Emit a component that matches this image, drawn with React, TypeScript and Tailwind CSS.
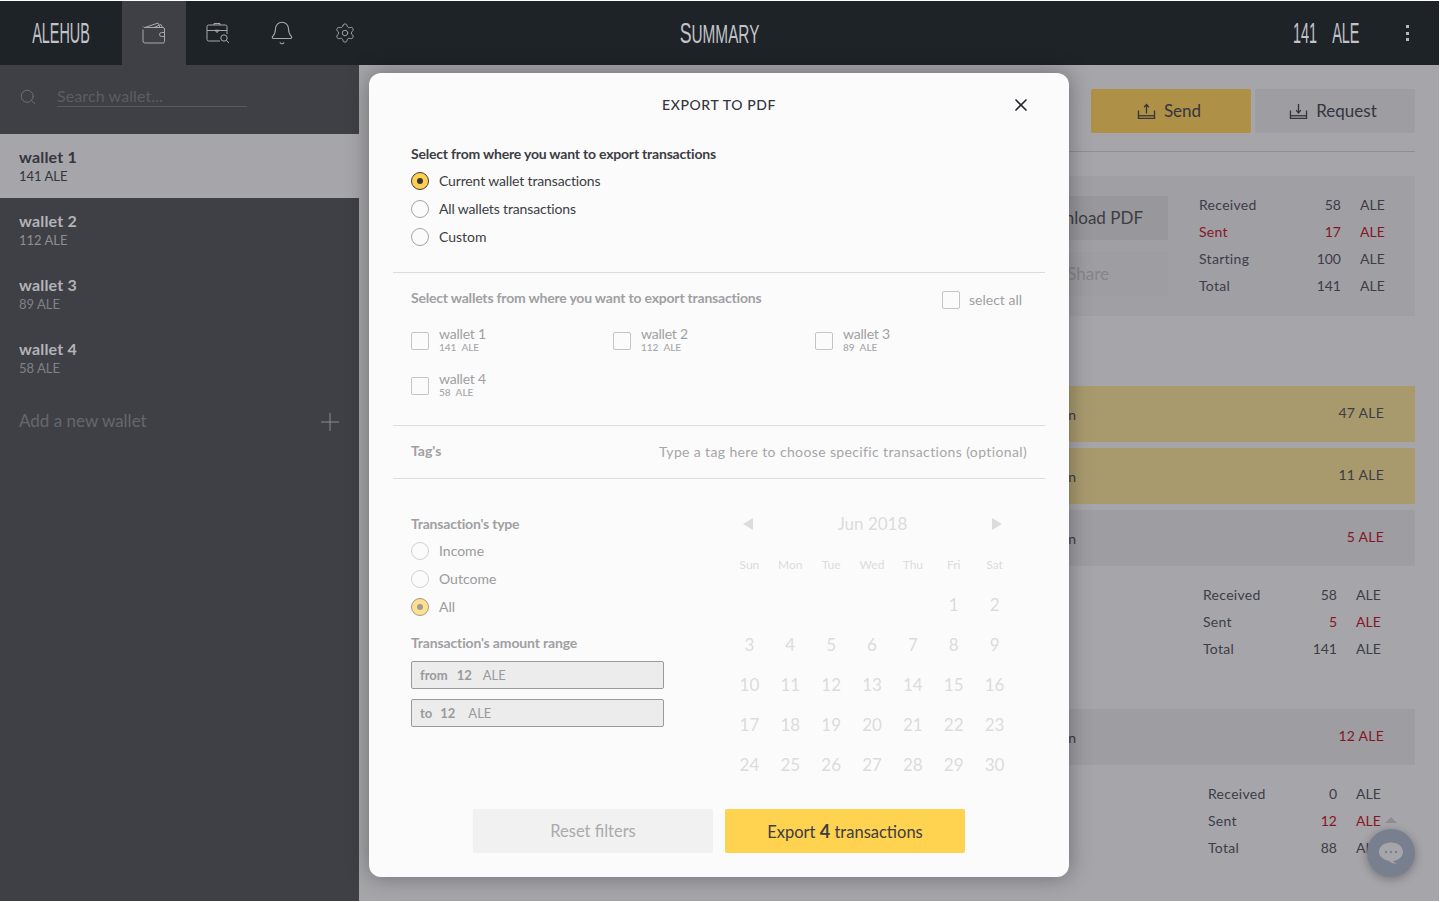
import React from "react";
import { Bell, Settings, Search, X } from "lucide-react";

const WalletIcon = () => (
  <svg width="24" height="22" viewBox="0 0 24 22" fill="none" stroke="#a8a8ac" strokeWidth="1" className="block">
    <path d="M1 7.500V19a2 2 0 0 0 2 2h18a1.500 1.500 0 0 0 1.500-1.500V7a1.500 1.500 0 0 0-1.500-1.500H3A2 2 0 0 1 1 4.500" />
    <path d="M3 5.500 16 1l2 4.500M12 5.500 19 2.500l1.500 3" />
    <path d="M22.500 10.500h-3a1.500 1.500 0 0 0 0 4h3" />
  </svg>
);

const CaseSearchIcon = () => (
  <svg width="24" height="22" viewBox="0 0 24 22" fill="none" stroke="#a8a8ac" strokeWidth="1" className="block">
    <path d="M14 19H2.500A1.500 1.500 0 0 1 1 17.500v-13A1.500 1.500 0 0 1 2.500 3h17A1.500 1.500 0 0 1 21 4.500V12" />
    <path d="M1 8.500h20M8 3V1.500h6V3" />
    <path d="M10 7.500v2.500h2V7.500" />
    <circle cx="18" cy="16" r="3.200" />
    <path d="m20.300 18.300 2.700 2.700" />
  </svg>
);

const TrayIcon = ({ up, color }: { up?: boolean; color: string }) => (
  <svg width="19" height="17" viewBox="0 0 20 18" fill="none" stroke={color} strokeWidth="1.400" className="block">
    <path d="M1.500 8v8.300h17V8" />
    <path d="M1.500 13.500h17" />
    {up ? <path d="M10 11V2M7.500 4.500 10 1.500l2.500 3" /> : <path d="M10 1v9M7.500 7.500 10 10.500l2.500-3" />}
  </svg>
);

const Radio = ({ label, on, dim, tight }: { label: string; on?: boolean; dim?: boolean; tight?: boolean }) => (
  <div className="flex h-7 items-center gap-[10px]">
    <div
      className={
        on
          ? dim
            ? "flex size-[18px] items-center justify-center rounded-full border border-[#9c9c9c] bg-[#ffdf8b]"
            : "flex size-[18px] items-center justify-center rounded-full border border-[#3c3d45] bg-[#ffcf4d]"
          : dim
            ? "size-[18px] rounded-full border border-[#d2d2d2] bg-[#fbfbfb]"
            : "size-[18px] rounded-full border border-[#a5a5a5] bg-[#fbfbfb]"
      }
    >
      {on && <div className={dim ? "size-[6px] rounded-full bg-[#9c9c9c]" : "size-[6px] rounded-full bg-[#34353d]"} />}
    </div>
    <span className={`pb-[2px] text-[14px] ${dim ? "text-[#9a9a9d]" : "text-[#3c3d45]"} ${tight ? "tracking-[-0.15px]" : ""}`}>{label}</span>
  </div>
);

const Check = () => <div className="size-[18px] shrink-0 rounded-[2px] border border-[#c4c4c4] bg-[#fbfbfb]" />;

const ModalWallet = ({ name, amount, unit }: { name: string; amount: string; unit: string }) => (
  <div className="flex h-[45px] items-center gap-[10px]">
    <Check />
    <div className="mb-[1px] flex flex-col text-[#a0a0a3]">
      <span className="text-[14px] leading-[14px] tracking-[-0.2px]">{name}</span>
      <span className="flex gap-[5px] text-[10px] font-medium leading-[12px] text-[#a6a6a8]">
        <span>{amount}</span>
        <span>{unit}</span>
      </span>
    </div>
  </div>
);

const days = ["Sun", "Mon", "Tue", "Wed", "Thu", "Fri", "Sat"];
const cells: string[] = ["", "", "", "", "", "1", "2"];
for (let d = 3; d <= 30; d++) cells.push(String(d));

const Calendar = () => (
  <div className="w-[286px] pt-[35px] text-[#dcdcdc]">
    <div className="flex h-5 items-center justify-between pl-[14px] pr-[13px]">
      <div className="h-0 w-0 border-y-[6px] border-r-[10px] border-y-transparent border-r-[#dcdcdc]" />
      <span className="text-[17px]">Jun 2018</span>
      <div className="h-0 w-0 border-y-[6px] border-l-[10px] border-y-transparent border-l-[#dcdcdc]" />
    </div>
    <div className="mt-[21px] grid h-5 grid-cols-7 items-center text-center text-[12px]">
      {days.map((d) => (
        <span key={d}>{d}</span>
      ))}
    </div>
    <div className="mt-[10px] grid grid-cols-7 text-center text-[17px]">
      {cells.map((c, i) => (
        <span key={i} className="flex h-10 items-center justify-center">
          {c}
        </span>
      ))}
    </div>
  </div>
);

const Modal = () => (
  <div className="absolute left-[369px] top-[73px] flex h-[804px] w-[700px] flex-col rounded-[12px] bg-[#fbfbfb] px-6 shadow-[0_0_22px_rgba(0,0,0,0.35)]">
    <div className="relative flex h-[64px] shrink-0 items-center justify-center">
      <span className="pb-[2px] text-[14px] font-medium tracking-[0.6px] text-[#34353d]">EXPORT TO PDF</span>
      <X className="absolute right-[14px] top-[22px]" size={20} strokeWidth={2} color="#26272d" />
    </div>
    <div className="border-b border-[#dcdcdc] px-[18px] pb-[21px] pt-[7px]">
      <h3 className="text-[14px] font-bold leading-5 tracking-[-0.2px] text-[#3c3d45]">
        Select from where you want to export transactions
      </h3>
      <div className="mt-[3px]">
        <Radio label="Current wallet transactions" on tight />
        <Radio label="All wallets transactions" tight />
        <Radio label="Custom" />
      </div>
    </div>
    <div className="border-b border-[#dcdcdc] px-[18px] pb-[17px] pt-[15px]">
      <div className="flex h-5 items-start justify-between pr-[5px]">
        <h3 className="text-[14px] font-bold leading-5 tracking-[-0.2px] text-[#a0a0a3]">
          Select wallets from where you want to export transactions
        </h3>
        <div className="mt-[2px] flex h-5 items-center gap-[9px]">
          <Check />
          <span className="text-[14px] leading-5 text-[#a0a0a3]">select all</span>
        </div>
      </div>
      <div className="mt-[10px] grid grid-cols-[202px_202px_202px]">
        <ModalWallet name="wallet 1" amount="141" unit="ALE" />
        <ModalWallet name="wallet 2" amount="112" unit="ALE" />
        <ModalWallet name="wallet 3" amount="89" unit="ALE" />
        <ModalWallet name="wallet 4" amount="58" unit="ALE" />
      </div>
    </div>
    <div className="flex h-[53px] items-center justify-between border-b border-[#dcdcdc] px-[18px]">
      <span className="pb-[3px] text-[14px] font-bold text-[#a0a0a3]">Tag's</span>
      <span className="pb-[2px] text-[14px] tracking-[0.37px] text-[#a6a6a8]">Type a tag here to choose specific transactions (optional)</span>
    </div>
    <div className="flex justify-between pl-[18px] pr-[30px]">
      <div className="w-[253px] pt-[35px]">
        <h3 className="text-[14px] font-bold leading-5 tracking-[-0.2px] text-[#a0a0a3]">Transaction's type</h3>
        <div className="mt-[3px]">
          <Radio label="Income" dim />
          <Radio label="Outcome" dim />
          <Radio label="All" on dim />
        </div>
        <h3 className="mt-[12px] text-[14px] font-bold leading-5 tracking-[-0.15px] text-[#a0a0a3]">Transaction's amount range</h3>
        <div className="mt-[8px] flex h-7 items-center rounded-[2px] border border-[#9a9a9a] bg-[#ececec] px-2 pt-px text-[13px] text-[#9a9a9c]">
          <span className="font-bold">from</span>
          <span className="ml-[9px] font-bold">12</span>
          <span className="ml-[11px]">ALE</span>
        </div>
        <div className="mt-[10px] flex h-7 items-center rounded-[2px] border border-[#9a9a9a] bg-[#ececec] px-2 pt-px text-[13px] text-[#9a9a9c]">
          <span className="font-bold">to</span>
          <span className="ml-[8px] font-bold">12</span>
          <span className="ml-[13px]">ALE</span>
        </div>
      </div>
      <Calendar />
    </div>
    <div className="mt-[24px] flex justify-center gap-3">
      <button className="h-11 w-60 rounded-[2px] bg-[#f1f1f1] text-[16.5px] text-[#ababad]">Reset filters</button>
      <button className="h-11 w-60 rounded-[2px] bg-[#ffd24f] text-[16.5px] text-[#3c3d45]">
        Export <b className="text-[18px]">4</b> transactions
      </button>
    </div>
  </div>
);

const Stats = ({ rows, col, pad }: { rows: { n: string; v: string; red?: boolean; redName?: boolean }[]; col: string; pad: string }) => (
  <div className={`flex justify-end ${pad}`}>
    <div className={`grid ${col} text-[14px] leading-[27px] text-[#3c3d48]`}>
      {rows.map((r) => (
        <React.Fragment key={r.n}>
          <span className={r.redName ? "tracking-[0.3px] text-[#861626]" : "tracking-[0.3px]"}>{r.n}</span>
          <span className={r.red ? "text-right text-[#861626]" : "text-right"}>{r.v}</span>
          <span className={r.red ? "pl-[19px] text-[#861626]" : "pl-[19px]"}>ALE</span>
        </React.Fragment>
      ))}
    </div>
  </div>
);

const TxRow = ({ yellow, value, red, cls }: { yellow?: boolean; value: string; red?: boolean; cls?: string }) => (
  <div className={`flex h-14 items-center justify-between pr-[31px] ${yellow ? "bg-[#a99a6e]" : "bg-[#9e9da2]"} ${cls ?? ""}`}>
    <span className="mt-[1px] w-[693px] text-right text-[14px] text-[#3c3d45]">Transaction</span>
    <span className={`mb-[3px] text-[14px] tracking-[0.25px] ${red ? "text-[#861626]" : "text-[#3c3d45]"}`}>{value}</span>
  </div>
);

const Main = () => (
  <main className="min-w-0 flex-1 overflow-hidden bg-[#a6a5aa] pl-6 pr-6 pt-6">
    <div className="flex justify-end gap-1">
      <button className="flex h-11 w-40 items-center justify-center gap-[8px] rounded-[2px] bg-[#ae9147] pr-[4px] text-[17px] text-[#34353d]">
        <TrayIcon up color="#34353d" />
        Send
      </button>
      <button className="flex h-11 w-40 items-center justify-center gap-[8px] rounded-[2px] bg-[#9e9da2] pr-[4px] text-[17px] text-[#34353d]">
        <TrayIcon color="#34353d" />
        Request
      </button>
    </div>
    <div className="mt-[18px] border-b border-[#8f8e94]" />
    <section className="mt-6 flex h-[140px] items-center justify-end bg-[#a09fa4]">
      <div className="mr-[31px] flex flex-col gap-3">
        <button className="flex h-11 w-40 items-center justify-end rounded-[2px] bg-[#98979c] pr-[25px] text-[17px] text-[#3c3d45]">Download PDF</button>
        <button className="flex h-11 w-40 items-center justify-end rounded-[2px] bg-[#9e9da2] pr-[59px] text-[17px] text-[#86858a]">Share</button>
      </div>
      <div className="mb-[2px]">
        <Stats
          col="grid-cols-[104px_38px_43px]"
          pad="pr-[31px]"
          rows={[
            { n: "Received", v: "58" },
            { n: "Sent", v: "17", red: true, redName: true },
            { n: "Starting", v: "100" },
            { n: "Total", v: "141" },
          ]}
        />
      </div>
    </section>
    <div className="mt-[70px] flex flex-col gap-[6px]">
      <TxRow yellow value="47 ALE" />
      <TxRow yellow value="11 ALE" />
      <TxRow value="5 ALE" red />
    </div>
    <div className="mt-[15px]">
      <Stats
        col="grid-cols-[96px_38px_43px]"
        pad="pr-[35px]"
        rows={[
          { n: "Received", v: "58" },
          { n: "Sent", v: "5", red: true },
          { n: "Total", v: "141" },
        ]}
      />
    </div>
    <TxRow value="12 ALE" red cls="mt-[47px]" />
    <div className="mt-[15px]">
      <Stats
        col="grid-cols-[91px_38px_43px]"
        pad="pr-[35px]"
        rows={[
          { n: "Received", v: "0" },
          { n: "Sent", v: "12", red: true },
          { n: "Total", v: "88" },
        ]}
      />
    </div>
  </main>
);

const Condensed = ({ children, w, wide }: { children: React.ReactNode; w: string; wide?: boolean }) => (
  <div className={`flex justify-center ${w}`}>
    <span
      className={`shrink-0 whitespace-pre font-['Liberation_Sans',sans-serif] text-[30px] leading-none text-[#c3c3c9] ${wide ? "scale-x-[0.59]" : "scale-x-[0.48]"}`}
    >
      {children}
    </span>
  </div>
);

const Header = () => (
  <header className="grid h-16 shrink-0 grid-cols-[1fr_auto_1fr] bg-[#1e2327]">
    <div className="flex items-stretch">
      <div className="flex w-[122px] items-center justify-center">
        <Condensed w="w-[58px]">ALEHUB</Condensed>
      </div>
      <div className="flex w-16 items-center justify-center bg-[#3f4045]">
        <WalletIcon />
      </div>
      <div className="flex w-16 items-center justify-center">
        <CaseSearchIcon />
      </div>
      <div className="flex w-16 items-center justify-center">
        <Bell size={26} strokeWidth={1} color="#a8a8ac" />
      </div>
      <div className="flex w-16 items-center justify-center pr-[2px]">
        <Settings size={22} strokeWidth={1} color="#a8a8ac" />
      </div>
    </div>
    <div className="flex items-center">
      <Condensed w="w-20" wide>
        S<span className="text-[26px] uppercase">ummary</span>
      </Condensed>
    </div>
    <div className="flex items-center justify-end">
      <Condensed w="w-[67px]">141    ALE</Condensed>
      <div className="ml-[46px] mr-[30px] flex flex-col gap-[3.5px]">
        <div className="size-[3px] bg-[#b8b8bd]" />
        <div className="size-[3px] bg-[#b8b8bd]" />
        <div className="size-[3px] bg-[#b8b8bd]" />
      </div>
    </div>
  </header>
);

const SideWallet = ({ name, amount, active, sub }: { name: string; amount: string; active?: boolean; sub?: string }) => (
  <div className={`flex h-16 flex-col justify-center pl-[19px] ${active ? "bg-[#a6a5aa]" : ""}`}>
    <span className={`text-[16px] font-bold leading-[20px] tracking-[0.2px] ${active ? "text-[#34353d]" : "text-[#b3b3b8]"}`}>{name}</span>
    <span className={`text-[13px] leading-[18px] ${active ? "text-[#34353d]" : sub}`}>{amount}</span>
  </div>
);

const Sidebar = () => (
  <aside className="w-[359px] shrink-0 bg-[#3f4045]">
    <div className="flex h-[69px] items-center pl-[19px]">
      <Search size={18} strokeWidth={1} color="#7a7a7e" className="mb-[5px]" />
      <div className="mb-[7px] ml-[20px] w-[190px] border-b border-[#58595d] text-[16px] leading-[20px] tracking-[0.1px] text-[#5c5d61]">Search wallet...</div>
    </div>
    <SideWallet name="wallet 1" amount="141 ALE" active />
    <SideWallet name="wallet 2" amount="112 ALE" sub="text-[#8d8d92]" />
    <SideWallet name="wallet 3" amount="89 ALE" sub="text-[#808085]" />
    <SideWallet name="wallet 4" amount="58 ALE" sub="text-[#808085]" />
    <div className="flex h-16 items-center justify-between pl-[19px] pr-[20px]">
      <span className="pb-[2px] text-[17px] text-[#66676b]">Add a new wallet</span>
      <svg width="18" height="18" viewBox="0 0 18 18" stroke="#8a8a8e" strokeWidth="1">
        <path d="M9 0v18M0 9h18" />
      </svg>
    </div>
  </aside>
);

const Chat = () => (
  <>
    <div className="absolute left-[1385px] top-[817px] h-0 w-0 border-x-[6px] border-b-[6px] border-x-transparent border-b-[#8d8c92]" />
    <div className="absolute left-[1367px] top-[829px] flex size-12 items-center justify-center rounded-full bg-[#78808f] shadow-[0_2px_10px_rgba(0,0,0,0.3)]">
      <svg width="24" height="24" viewBox="0 0 24 24">
        <path d="M12 1.500c6.600 0 12 3.900 12 9.300 0 5-4.500 8.900-10.200 9.200 1.500 1.700 3 2.400 4 2.700-2.500.3-6-.8-8.300-2.900C4.200 18.700 0 15.300 0 10.800 0 5.400 5.400 1.500 12 1.500Z" fill="#a6a5aa" />
        <circle cx="7" cy="11" r="1.200" fill="#78808f" />
        <circle cx="12" cy="11" r="1.200" fill="#78808f" />
        <circle cx="17" cy="11" r="1.200" fill="#78808f" />
      </svg>
    </div>
  </>
);

export default function App() {
  return (
    <div className="relative flex h-[902px] w-[1440px] flex-col overflow-hidden bg-white pb-px pr-px pt-px font-['Lato',sans-serif]">
      <Header />
      <div className="flex min-h-0 flex-1">
        <Sidebar />
        <Main />
      </div>
      <Modal />
      <Chat />
    </div>
  );
}
